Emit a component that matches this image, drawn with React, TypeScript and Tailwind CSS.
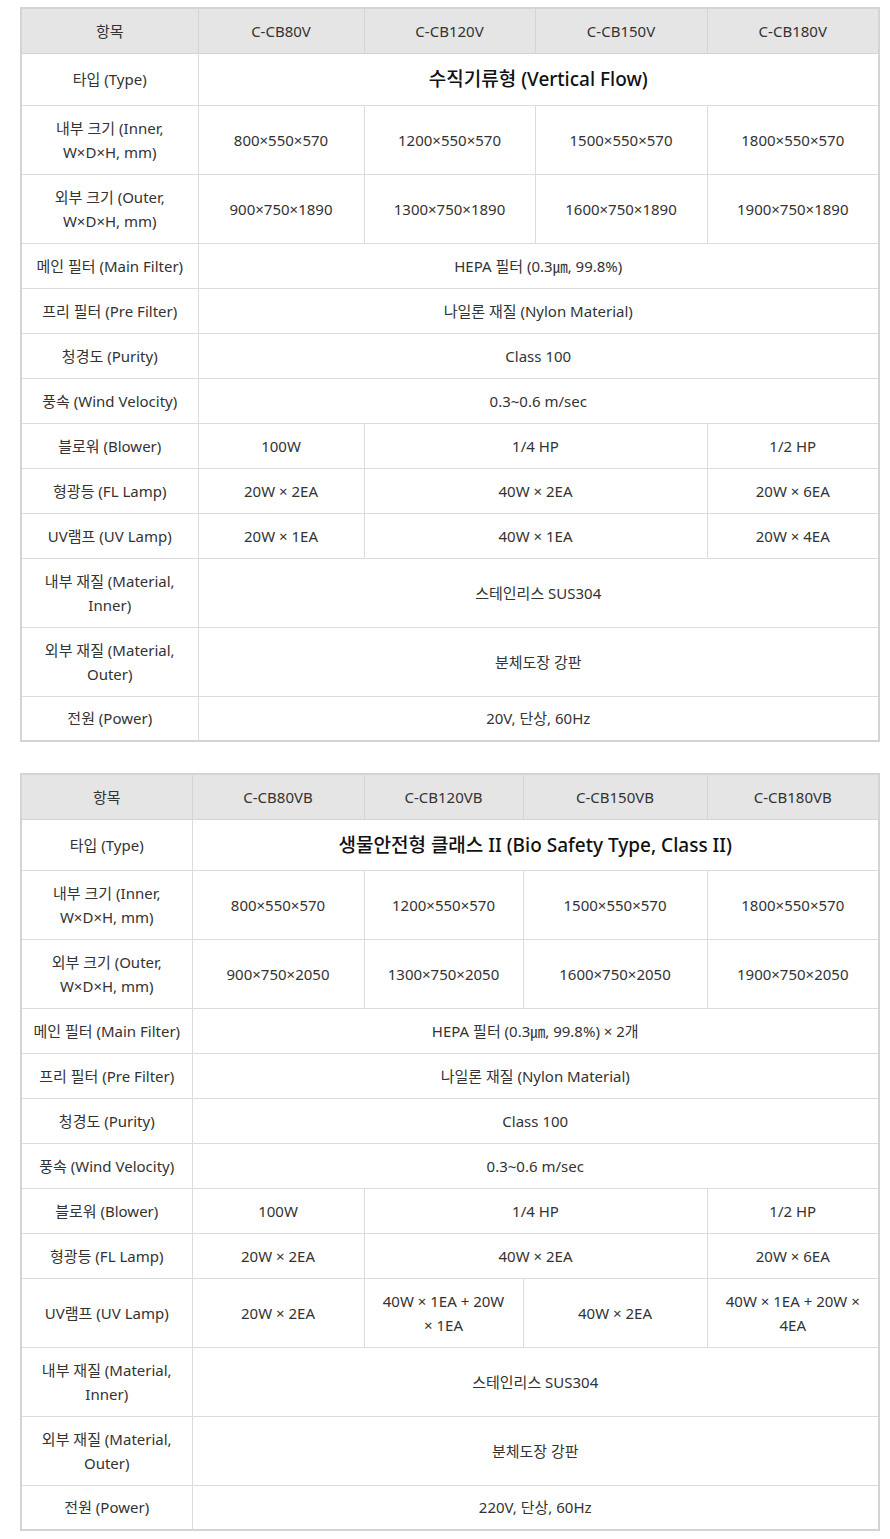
import React from "react";

type Cell = { t: React.ReactNode; span?: number; big?: boolean };
type Row = { label: React.ReactNode; cells: Cell[]; h: number };

const F = "font-['Noto_Sans','Noto_Sans_CJK_KR',sans-serif]";

function Spec({
  cols,
  models,
  rows,
}: {
  cols: number[];
  models: string[];
  rows: Row[];
}) {
  return (
    <table className="table-fixed border-collapse border-2 border-[#d4d4d4] w-[858px]">
      <colgroup>
        {cols.map((w, i) => (
          <col key={i} style={{ width: w }} />
        ))}
      </colgroup>
      <thead>
        <tr className="h-[45px] bg-[#e5e5e5]">
          <th className="border border-[#d4d4d4] font-normal text-[15px] text-[#333] text-center align-middle">항목</th>
          {models.map((m) => (
            <th key={m} className="border border-[#d4d4d4] font-normal text-[15px] text-[#333] text-center align-middle">
              {m}
            </th>
          ))}
        </tr>
      </thead>
      <tbody>
        {rows.map((r, i) => (
          <tr key={i} style={{ height: r.h }}>
            <td className="border border-[#dcdcdc] text-[15px] leading-[24px] text-[#333] text-center align-middle px-2">
              {r.label}
            </td>
            {r.cells.map((c, j) => (
              <td
                key={j}
                colSpan={c.span ?? 1}
                className={
                  c.big
                    ? "border border-[#dcdcdc] text-[19px] font-medium leading-[28px] text-[#111] text-center align-middle"
                    : "border border-[#dcdcdc] text-[15px] leading-[24px] text-[#333] text-center align-middle px-2"
                }
              >
                {c.t}
              </td>
            ))}
          </tr>
        ))}
      </tbody>
    </table>
  );
}

const two = (a: string, b: string) => (
  <>
    {a}
    <br />
    {b}
  </>
);

export default function App() {
  const rows1: Row[] = [
    { label: "타입 (Type)", cells: [{ t: "수직기류형 (Vertical Flow)", span: 4, big: true }], h: 52 },
    {
      label: two("내부 크기 (Inner,", "W×D×H, mm)"),
      cells: [{ t: "800×550×570" }, { t: "1200×550×570" }, { t: "1500×550×570" }, { t: "1800×550×570" }],
      h: 69,
    },
    {
      label: two("외부 크기 (Outer,", "W×D×H, mm)"),
      cells: [{ t: "900×750×1890" }, { t: "1300×750×1890" }, { t: "1600×750×1890" }, { t: "1900×750×1890" }],
      h: 69,
    },
    { label: "메인 필터 (Main Filter)", cells: [{ t: "HEPA 필터 (0.3㎛, 99.8%)", span: 4 }], h: 45 },
    { label: "프리 필터 (Pre Filter)", cells: [{ t: "나일론 재질 (Nylon Material)", span: 4 }], h: 45 },
    { label: "청경도 (Purity)", cells: [{ t: "Class 100", span: 4 }], h: 45 },
    { label: "풍속 (Wind Velocity)", cells: [{ t: "0.3~0.6 m/sec", span: 4 }], h: 45 },
    { label: "블로워 (Blower)", cells: [{ t: "100W" }, { t: "1/4 HP", span: 2 }, { t: "1/2 HP" }], h: 45 },
    { label: "형광등 (FL Lamp)", cells: [{ t: "20W × 2EA" }, { t: "40W × 2EA", span: 2 }, { t: "20W × 6EA" }], h: 45 },
    { label: "UV램프 (UV Lamp)", cells: [{ t: "20W × 1EA" }, { t: "40W × 1EA", span: 2 }, { t: "20W × 4EA" }], h: 45 },
    { label: two("내부 재질 (Material,", "Inner)"), cells: [{ t: "스테인리스 SUS304", span: 4 }], h: 69 },
    { label: two("외부 재질 (Material,", "Outer)"), cells: [{ t: "분체도장 강판", span: 4 }], h: 69 },
    { label: "전원 (Power)", cells: [{ t: "20V, 단상, 60Hz", span: 4 }], h: 45 },
  ];

  const rows2: Row[] = [
    { label: "타입 (Type)", cells: [{ t: "생물안전형 클래스 II (Bio Safety Type, Class II)", span: 4, big: true }], h: 51 },
    {
      label: two("내부 크기 (Inner,", "W×D×H, mm)"),
      cells: [{ t: "800×550×570" }, { t: "1200×550×570" }, { t: "1500×550×570" }, { t: "1800×550×570" }],
      h: 69,
    },
    {
      label: two("외부 크기 (Outer,", "W×D×H, mm)"),
      cells: [{ t: "900×750×2050" }, { t: "1300×750×2050" }, { t: "1600×750×2050" }, { t: "1900×750×2050" }],
      h: 69,
    },
    { label: "메인 필터 (Main Filter)", cells: [{ t: "HEPA 필터 (0.3㎛, 99.8%) × 2개", span: 4 }], h: 45 },
    { label: "프리 필터 (Pre Filter)", cells: [{ t: "나일론 재질 (Nylon Material)", span: 4 }], h: 45 },
    { label: "청경도 (Purity)", cells: [{ t: "Class 100", span: 4 }], h: 45 },
    { label: "풍속 (Wind Velocity)", cells: [{ t: "0.3~0.6 m/sec", span: 4 }], h: 45 },
    { label: "블로워 (Blower)", cells: [{ t: "100W" }, { t: "1/4 HP", span: 2 }, { t: "1/2 HP" }], h: 45 },
    { label: "형광등 (FL Lamp)", cells: [{ t: "20W × 2EA" }, { t: "40W × 2EA", span: 2 }, { t: "20W × 6EA" }], h: 45 },
    {
      label: "UV램프 (UV Lamp)",
      cells: [
        { t: "20W × 2EA" },
        { t: two("40W × 1EA + 20W", "× 1EA") },
        { t: "40W × 2EA" },
        { t: two("40W × 1EA + 20W ×", "4EA") },
      ],
      h: 69,
    },
    { label: two("내부 재질 (Material,", "Inner)"), cells: [{ t: "스테인리스 SUS304", span: 4 }], h: 69 },
    { label: two("외부 재질 (Material,", "Outer)"), cells: [{ t: "분체도장 강판", span: 4 }], h: 69 },
    { label: "전원 (Power)", cells: [{ t: "220V, 단상, 60Hz", span: 4 }], h: 45 },
  ];

  return (
    <div className={`${F} bg-white w-[890px] min-h-[1539px] pt-[7px] pl-[20px] flex flex-col gap-[31px]`}>
      <Spec
        cols={[177, 166, 171, 172, 172]}
        models={["C-CB80V", "C-CB120V", "C-CB150V", "C-CB180V"]}
        rows={rows1}
      />
      <Spec
        cols={[171, 172, 159, 184, 172]}
        models={["C-CB80VB", "C-CB120VB", "C-CB150VB", "C-CB180VB"]}
        rows={rows2}
      />
    </div>
  );
}
